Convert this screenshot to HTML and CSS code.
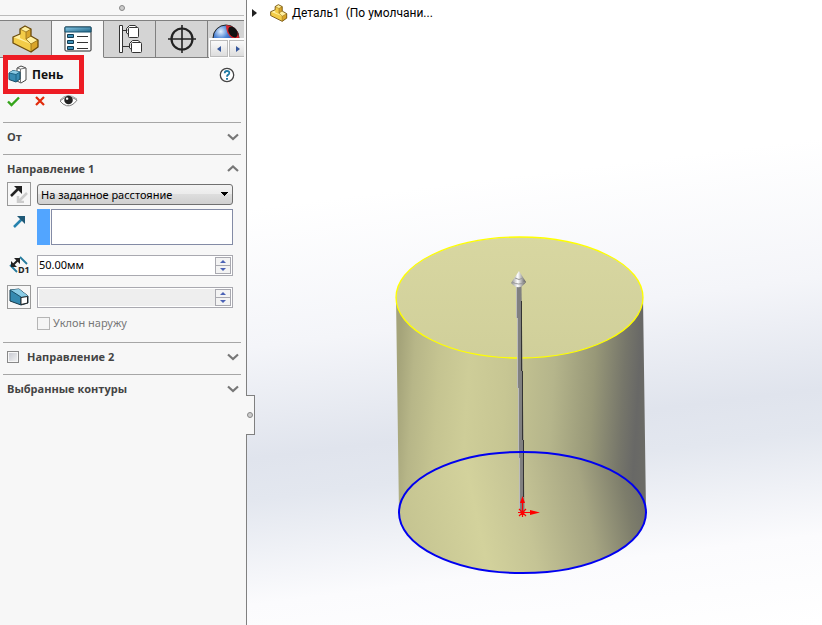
FILE: index.html
```html
<!DOCTYPE html>
<html lang="ru">
<head>
<meta charset="utf-8">
<title>Деталь1</title>
<link rel="stylesheet" href="styles.css">
</head>
<body>
<svg class="defs" width="0" height="0" aria-hidden="true">
  <defs>
    <linearGradient id="teal" x1="0" y1="0" x2="1" y2="1"><stop offset="0" stop-color="#8cc9e6"/><stop offset="1" stop-color="#1f6688"/></linearGradient>
    <symbol id="part" viewBox="0 0 28 28">
      <path d="M8 4 13 1 19 4V11L20 12 26 15V22L19 27 1 18V12L8 9Z" fill="#f3cc48"/>
      <path d="M8 4 13 1 19 4 14 7ZM14 14 19 11 26 15 19 19ZM1 12 8 9V13L14 16 19 19Z" fill="#fff0a0"/>
      <path d="M14 7 19 4V11L14 14ZM19 19 26 15V22L19 27Z" fill="#d9a52a"/>
      <path d="M8 4 14 7V14L19 19V27M14 7 19 4M19 19 26 15M14 14 19 11" fill="none" stroke="#94701c" stroke-width=".8"/>
      <path d="M8 4 13 1 19 4V11L26 15V22L19 27 1 18V12L8 9Z" fill="none" stroke="#6b4b0a" stroke-width="1.300" stroke-linejoin="round"/>
    </symbol>
    <symbol id="down" viewBox="0 0 12 8"><path d="M1 1.500 6 6 11 1.500" fill="none" stroke="#777" stroke-width="2.200"/></symbol>
    <symbol id="up" viewBox="0 0 12 8"><path d="M1 6 6 1.500 11 6" fill="none" stroke="#777" stroke-width="2.200"/></symbol>
  </defs>
</svg>
<div class="app">
  <aside class="panel">
    <div class="grip"><span class="dot"></span></div>
    <nav class="tabs">
      <button class="tab" aria-label="Дерево"><svg width="28" height="28"><use href="#part"/></svg></button>
      <button class="tab active" aria-label="Свойства">
        <svg width="28" height="26" viewBox="0 0 28 26">
          <rect x="1" y="1" width="26" height="24" rx="1" fill="#fff" stroke="#222"/><path d="M1 1H27V6H1Z" fill="url(#teal)" stroke="#17516c"/>
          <path d="M3.500 8.500h6v3h-6ZM3.500 14.500h6v3h-6ZM3.500 20.500h6v3h-6Z" fill="#3c8fb8" stroke="#123c52"/>
          <path d="M13 10.500h11M13 16.500h11M13 22.500h11" stroke="#333"/>
        </svg>
      </button>
      <button class="tab" aria-label="Конфигурации">
        <svg width="24" height="30" viewBox="0 0 24 30" fill="#fff" stroke="#333">
          <path d="M1.500 1.500h3v27h-3ZM4.500 6.500h5M4.500 22.500h7" /><path d="M8.500 4.500 11.500 1.500H17L20 4M8.500 4.500V9l3 2M11.500 19.500 14.500 16.500H20L23 19M11.500 19.500V24l3 2"/>
          <rect x="10.500" y="3.500" width="10" height="10" rx="1"/><rect x="13.500" y="18.500" width="10" height="10" rx="1"/>
        </svg>
      </button>
      <button class="tab" aria-label="Размеры">
        <svg width="28" height="28" viewBox="0 0 28 28" fill="none" stroke="#222"><circle cx="14" cy="14" r="10.500" stroke-width="2.200"/><path d="M14 0V28M0 14H28" stroke-width="1.600"/></svg>
      </button>
      <button class="tab last" aria-label="Отображение">
        <svg width="28" height="28" viewBox="0 0 28 28">
          <defs><radialGradient id="ball" cx=".3" cy=".25" r=".7"><stop offset="0" stop-color="#e4f1ff"/><stop offset=".4" stop-color="#4d84d5"/><stop offset="1" stop-color="#173a86"/></radialGradient></defs>
          <circle cx="14" cy="14" r="13" fill="url(#ball)" stroke="#222"/><path d="M14 1Q26 2 27 14H20Q14 10 14 1Z" fill="#d9252b"/><ellipse cx="21" cy="8" rx="4" ry="6" transform="rotate(-35 21 8)" fill="#111"/>
        </svg>
      </button>
      <div class="scroll">
        <button aria-label="Назад"><svg width="4" height="6"><path d="M4 0V6L0 3Z" fill="#34569b"/></svg></button>
        <button aria-label="Вперед"><svg width="4" height="6"><path d="M0 0V6L4 3Z" fill="#34569b"/></svg></button>
      </div>
    </nav>
    <header class="title">
      <h1>
        <svg width="19" height="20" viewBox="0 0 19 20"><path d="M9 3 13 1 18 3V15L13 18 9 16Z" fill="#fff" stroke="#444"/><path d="M12.500 4V17M12.500 4 18 3M9 3l3.500 1" stroke="#777" fill="none"/><path d="M1 8 5 5.500 12 7V14L8 17 1 14.500Z" fill="#398bb2" stroke="#154a63"/><path d="M1 8 8 9.500 12 7 5 5.500Z" fill="#8ccbe5"/><path d="M1 8 8 9.500 12 7M8 9.500V17" fill="none" stroke="#1c6384"/></svg>
        Пень
      </h1>
      <button class="help" aria-label="Справка"><svg width="16" height="16" viewBox="0 0 16 16" fill="none"><circle cx="8" cy="8" r="6.700" fill="#fff" stroke="#444" stroke-width="1.300"/><path d="M5.700 6.200Q5.800 4 8 4 10.400 4 10.300 6 10.200 7.200 9 7.900 8 8.500 8 9.700" stroke="#207ba5" stroke-width="1.800"/><path d="M7 11h2v1.800H7Z" fill="#207ba5"/></svg></button>
    </header>
    <div class="confirm">
      <button aria-label="ОК"><svg width="13" height="11"><path d="M1 5.500 4.500 9 12 1.500" fill="none" stroke="#35a51b" stroke-width="2.400"/></svg></button>
      <button aria-label="Отмена"><svg width="12" height="10"><path d="M2 1 10 9M10 1 2 9" stroke="#e12a0b" stroke-width="2.200"/></svg></button>
      <button aria-label="Просмотр"><svg width="18" height="14" viewBox="1 0 19 14"><path d="M1 7Q9-1 19 6 14 13 8 12 4 11 1 7Z" fill="#fff" stroke="#777"/><path d="M1 6Q9-3 19 5" fill="none" stroke="#999"/><circle cx="10" cy="6" r="4.500" fill="#222"/><circle cx="8.500" cy="4.500" r="1.300" fill="#fff"/></svg></button>
    </div>

    <section>
      <h2>От <svg class="chev" width="12" height="8"><use href="#down"/></svg></h2>
    </section>
    <section class="open">
      <h2>Направление 1 <svg class="chev" width="12" height="8"><use href="#up"/></svg></h2>
      <div class="fields">
        <button class="tool framed" aria-label="Реверс"><svg width="18" height="18" viewBox="0 0 18 18"><path d="M17 8 8 17M8 11V17H14" stroke="#ccc" stroke-width="2.500" fill="none"/><path d="M1 11 9 3" stroke="#222" stroke-width="2.500"/><path d="M4 1H12V9Z" fill="#222"/></svg></button>
        <select class="method" aria-label="Граничное условие"><option>На заданное расстояние</option></select>
        <span class="tool"><svg width="13" height="13"><path d="M1 12 9 4" stroke="#2683ae" stroke-width="2.500"/><path d="M4 1H12V9Z" fill="#1f5977"/></svg></span>
        <div class="pick"><textarea aria-label="Направление вытяжки"></textarea></div>
        <span class="tool"><svg width="20" height="20" viewBox="0 0 20 20"><path d="M11 2 18 9M1 10 8 17" stroke="#267b9d" stroke-width="1.800"/><path d="M4 10 10 4" stroke="#222" stroke-width="2"/><path d="M5 3H11V9ZM2 6V12H8Z" fill="#222"/><text x="9" y="18" class="d1">D1</text></svg></span>
        <div class="spin"><input aria-label="Глубина" value="50.00мм"><span class="steps"><button aria-label="Больше"></button><button class="less" aria-label="Меньше"></button></span></div>
        <button class="tool framed" aria-label="Уклон"><svg width="20" height="18" viewBox="0 0 20 18"><path d="M1 2 10 1 19 8V15L12 17 1 13Z" fill="#358ab0" stroke="#17394a"/><path d="M1 2 10 1 19 8 12 9Z" fill="#8bcce5"/><path d="M1 2 12 9V17" fill="none" stroke="#17506a"/><path d="M12 9.500 18.500 8.500V15L12 16.500Z" fill="#fff" stroke="#222"/></svg></button>
        <div class="spin off"><input aria-label="Угол уклона" disabled><span class="steps"><button aria-label="Больше" disabled></button><button class="less" aria-label="Меньше" disabled></button></span></div>
        <label class="draft"><input type="checkbox" disabled> Уклон наружу</label>
      </div>
    </section>
    <section>
      <h2><label class="dir2"><input type="checkbox"> Направление 2</label> <svg class="chev" width="12" height="8"><use href="#down"/></svg></h2>
    </section>
    <section>
      <h2>Выбранные контуры <svg class="chev" width="12" height="8"><use href="#down"/></svg></h2>
    </section>
    <button class="handle" aria-label="Свернуть"><span class="dot"></span></button>
  </aside>

  <main class="view">
    <svg class="scene" viewBox="247 0 575 625" role="img" aria-label="Цилиндр">
      <defs>
        <linearGradient id="side" gradientUnits="userSpaceOnUse" x1="396" y1="410" x2="646" y2="425">
          <stop offset="0" stop-color="#a5a47a"/><stop offset=".06" stop-color="#b7b688"/><stop offset=".16" stop-color="#c5c491"/><stop offset=".28" stop-color="#cecd98"/><stop offset=".43" stop-color="#c7c693"/><stop offset=".62" stop-color="#b5b58b"/><stop offset=".78" stop-color="#989878"/><stop offset=".9" stop-color="#76766a"/><stop offset=".96" stop-color="#686866"/><stop offset="1" stop-color="#6b6b66"/>
        </linearGradient>
        <linearGradient id="base" gradientUnits="userSpaceOnUse" x1="410" y1="550" x2="646" y2="500">
          <stop offset="0" stop-color="#c5c491"/><stop offset=".3" stop-color="#d3d29c"/><stop offset=".5" stop-color="#c5c495"/><stop offset=".75" stop-color="#a6a582"/><stop offset=".92" stop-color="#7d7d6b"/><stop offset="1" stop-color="#6f6f67"/>
        </linearGradient>
        <linearGradient id="lid" x1="0" y1="0" x2="0" y2="1"><stop offset="0" stop-color="#d8d7a1"/><stop offset="1" stop-color="#d0cf9a"/></linearGradient>
        <linearGradient id="cone"><stop offset="0" stop-color="#888"/><stop offset=".45" stop-color="#fff"/><stop offset="1" stop-color="#555"/></linearGradient>
      </defs>
      <path d="M396 297 399 513A123.500 60 0 0 0 646 512L643 297Z" fill="url(#side)"/>
      <ellipse cx="522.500" cy="512" rx="123.500" ry="60.500" fill="url(#base)"/>
      <ellipse cx="519.500" cy="297.500" rx="123.500" ry="60.500" fill="url(#lid)" stroke="#ff0" stroke-width="1.300"/>
      <path d="M516.500 286H521.500L524.500 512H520Z" fill="#808080"/>
      <path d="M516.500 286V318M517.500 318V388M518.500 388V458M519.500 458V512" stroke="#bcbcbc"/>
      <path d="M521.500 301V371M522.500 371V440M523.500 440V497" stroke="#333"/>
      <path d="M519 271 526 282Q519 292 511 283Z" fill="url(#cone)"/>
      <path d="M515 278Q519 281 523 278M512 282Q519 286 525 282" fill="none" stroke="#999"/>
      <ellipse cx="522.500" cy="512.500" rx="123.500" ry="60.500" fill="none" stroke="#0000f0" stroke-width="2"/>
      <path d="M522.500 512.500V502M522.500 512.500H532M519 509 526 516M526 509 519 516M518 512.500H522M522.500 512V517" stroke="red" fill="none" stroke-width="1.200"/>
      <path d="M522.500 496 525 503H520ZM540 512.500 530 510V515Z" fill="red"/>
    </svg>
    <div class="tree">
      <svg width="5" height="8"><path d="M0 0V8L5 4Z" fill="#222"/></svg>
      <svg class="node" width="18" height="18"><use href="#part"/></svg>
      <span>Деталь1&nbsp; (По умолчани...</span>
    </div>
  </main>
</div>
</body>
</html>
```
FILE: styles.css
```css
*, ::after { box-sizing: border-box; }
body { margin: 0; font: 11px/16px "Noto Sans", "Open Sans", sans-serif; color: #444; }
button { padding: 0; border: 0; background: none; color: inherit; font: inherit; display: flex; align-items: center; justify-content: center; }
svg { display: block; flex: none; }
.defs { position: absolute; }
.app { display: grid; grid-template-columns: 247px 1fr; min-height: 100vh; }
.panel { position: relative; z-index: 1; background: #f7f7f7; border-right: 1px solid #808080; }
.grip { height: 16px; margin-right: 2px; border-bottom: 1px solid #bbb; display: flex; align-items: center; justify-content: center; }
.dot { width: 6px; height: 6px; border: 1px solid #888; border-radius: 50%; background: #ccc; }

.tabs { position: relative; display: grid; grid-template-columns: 52px 52px 52px 52px 1fr; height: 38px; margin: 4px 2px 0 0; overflow: hidden; }
.tab { background: #d4d4d4; border: solid #808080; border-width: 1px 1px 1px 0; min-width: 0; }
.tab.active { background: #f7f7f7; border-bottom-color: #f7f7f7; }
.tab.last { border-right: 0; align-items: start; padding-top: 3px; }
.scroll { position: absolute; right: -3px; bottom: 0; display: flex; gap: 1px; width: 38px; height: 20px; padding: 2px 0 1px 1px; background: #fff; }
.scroll button { flex: 1; border: 1px solid #bbb; background: linear-gradient(#fafafa, #ddd); }

.title { display: flex; align-items: center; justify-content: space-between; height: 34px; padding: 0 11px 0 8px; }
h1 { position: relative; display: flex; align-items: center; gap: 5px; margin: 0; font: 700 12px/16px "Open Sans", "Noto Sans", sans-serif; color: #111; }
h1::after { content: ""; position: absolute; inset: -10px auto auto -5px; width: 81px; height: 39px; border: 5px solid #ed1c24; }
.confirm { display: flex; align-items: center; gap: 14px; height: 18px; margin-bottom: 12px; padding-left: 7px; }

section { margin: 0 5px 0 3px; padding-bottom: 4px; border-top: 1px solid #a6a6a6; }
h2 { display: flex; align-items: center; justify-content: space-between; height: 27px; margin: 0; padding: 0 2px 0 4px; font: 700 11px/16px "Open Sans", "Noto Sans", sans-serif; }
.open { padding-bottom: 8px; }
.fields { display: grid; grid-template: 24px 36px 34px 24px 22px / 24px 1fr; gap: 3px 6px; padding: 0 8px 0 4px; align-items: center; }
.tool { display: flex; align-items: center; justify-content: center; height: 24px; }
span.tool { align-self: start; }
.tool:nth-of-type(2) { align-self: center; }
.framed { border: 1px solid #999; }
.method {
  appearance: none; height: 21px; padding: 1px 3px 0; border: 1px solid #707070; border-radius: 3px; color: #000; font: inherit;
  background-image: linear-gradient(to bottom right, #000 50%, transparent 50%), linear-gradient(to bottom left, #000 50%, transparent 50%), linear-gradient(#f3f3f3, #ebebeb 50%, #ddd 50%, #d0d0d0);
  background-size: 4px 4px, 4px 4px, auto; background-position: right 3px center, right 7px center, 0 0; background-repeat: no-repeat;
}
.pick { display: flex; height: 36px; border-left: 13px solid #52a5ff; }
.pick textarea { flex: 1; min-width: 0; padding: 0; margin: 0 0 0 1px; border: 1px solid #838ba5; background: #fff; resize: none; }
.spin { display: flex; height: 21px; border: 1px solid #a9a9b0; background: #fff; padding: 1px; }
.spin input { flex: 1; min-width: 0; border: 0; padding: 0 0 1px; background: #fff; font: inherit; color: #000; }
.spin.off input { background: #eee; }
.steps { display: grid; gap: 1px; width: 16px; padding: 1px; background: #a9a9b0; }
.steps button { background: #f3f3f3; }
.steps button::before { content: ""; border: solid transparent; border-width: 0 3px 3px; border-bottom-color: #4b62b5; }
.steps .less::before { border-width: 3px 3px 0; border-top-color: #4b62b5; }
input[type="checkbox"] { appearance: none; width: 13px; height: 13px; margin: 0; border: 1px solid #b5b5b5; background: #f5f5f5; }
.draft { grid-column: 2; display: flex; align-items: center; gap: 3px; color: #777; }
.dir2 { display: flex; align-items: center; gap: 8px; }
.dir2 input[type="checkbox"] { width: 12px; height: 12px; border-color: #888; background: linear-gradient(135deg, #c5c7cf, #f5f5f5); box-shadow: inset 0 0 0 1px #f7f7f7; }
.handle { position: absolute; left: 246px; top: 395px; width: 9px; height: 40px; border: 1px solid #808080; border-left: 0; background: #f7f7f7; }

.view { position: relative; min-width: 0; background: linear-gradient(173deg, #fff 0, #fff 30%, #f4f5f9 50%, #e0e4ed 66%, #e3e7ef 72%, #fbfbfd 87%, #fff 100%); }
.scene { width: 100%; height: 100vh; }
.tree { position: absolute; left: 5px; top: 4px; display: flex; align-items: center; height: 18px; color: #000; font: 12px/18px Roboto, "Noto Sans", sans-serif; white-space: nowrap; }
.node { margin: 0 4px 0 13px; }
.d1 { font: bold 9px "Noto Sans", sans-serif; fill: #222; }
```
